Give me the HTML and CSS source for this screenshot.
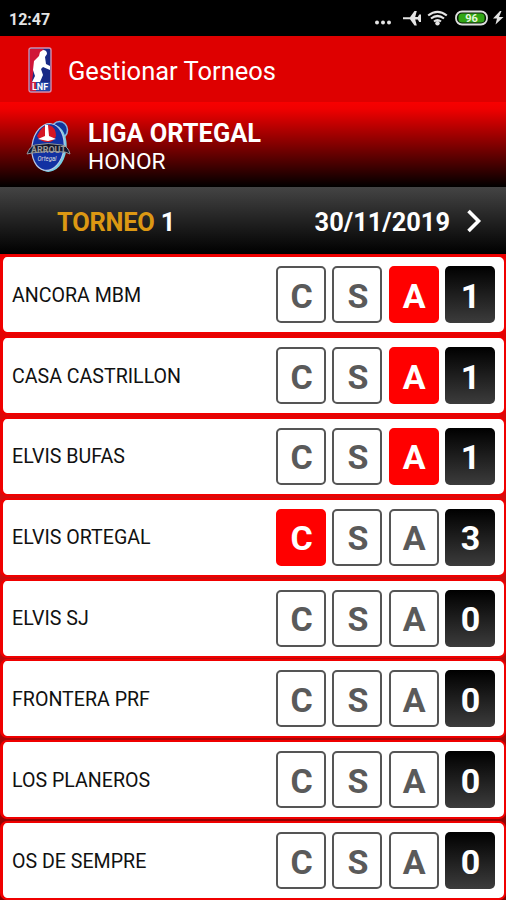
FILE: index.html
```html
<!DOCTYPE html>
<html lang="es">
<head>
    <meta charset="UTF-8">
    <meta name="viewport" content="width=device-width, initial-scale=1.0">
    <title>Gestionar Torneos</title>
    <link rel="stylesheet" href="styles.css">
</head>
<body>
    <div class="statusbar">
        <span class="clock">12:47</span>
        <svg class="status-icons" width="134" height="36" viewBox="0 0 134 36">
            <g fill="#e4e4e4">
                <circle cx="5" cy="22.500" r="2"/>
                <circle cx="11" cy="22.500" r="2"/>
                <circle cx="17" cy="22.500" r="2"/>
                <!-- avion -->
                <path d="M31 17.200h7L42.500 11h2.300l-1.600 6h2.600l1.400-2.500H49v7.400h-1.800L45.800 19.400h-2.600l1.600 6h-2.300L38 19.200h-7z"/>
                <circle cx="65.500" cy="23.200" r="2.200"/>
            </g>
            <!-- wifi -->
            <g fill="none" stroke="#e4e4e4" stroke-width="2.200">
                <path d="M56.200 15.500q9.300-7.400 18.600 0"/>
                <path d="M59 18.500q6.500-5 13 0"/>
                <path d="M62 21.500q3.500-2.800 7 0"/>
            </g>
            <!-- bateria -->
            <rect x="84" y="11.500" width="31" height="13" rx="6" fill="#071d05" stroke="#dedede" stroke-width="1.800"/>
            <rect x="86.500" y="13.500" width="26" height="9" rx="3.500" fill="#31a514"/>
            <text class="battery" x="99.500" y="22" text-anchor="middle">96</text>
            <path d="M128 11l-7 7.500h4l-1.500 6 8-7.500h-4.500l2.500-6z" fill="#e4e4e4"/>
        </svg>
    </div>

    <header class="appbar">
        <svg class="logo" width="24" height="46" viewBox="0 0 24 46">
            <rect x="1" y="1" width="22" height="44" rx="2" fill="#182a86"/>
            <path d="M2 2h14L6 19l-2 16H2z" fill="#d01537"/>
            <path d="M15 3q4 0 4 4l-2 3 1 7 4 2v4l-7-3-2 2 2 6-3 7H4l3-6-2-6 1-9 5-5 1-4z" fill="#fff"/>
            <path d="M2 35h20v9H2z" fill="#2546a4"/>
            <path d="M2 35h6v9H2z" fill="#c92142"/>
            <rect x="1" y="1" width="22" height="44" rx="2" fill="none" stroke="#d690ad" stroke-width="1.400"/>
            <text class="logo-text" x="12" y="43" text-anchor="middle">LNF</text>
        </svg>
        <h1>Gestionar Torneos</h1>
    </header>

    <section class="liga">
        <svg class="escudo" width="46" height="54" viewBox="0 0 46 54">
            <ellipse cx="33.500" cy="10" rx="8" ry="8.500" fill="#12359b" stroke="#89b5e1" stroke-width="1.500"/>
            <ellipse cx="24" cy="28" rx="16.500" ry="24" fill="#76cde2" transform="rotate(8 24 28)"/>
            <ellipse cx="22" cy="27" rx="16" ry="23.500" fill="#1231a3" stroke="#b7c7e5" stroke-width="1.200" transform="rotate(8 22 27)"/>
            <path d="M11 16q5-11 12-11 7 2 7 11-2 6-8 6-8 0-11-6z" fill="#d51624"/>
            <path d="M19 5h3l1 11 7 3-8 2-10-2 7-3z" fill="#fff"/>
            <path d="M1 34q3-8 8-9 13-3 27 0 6 1 8 9l-5-2q-17-2-33 1z" fill="#11152c" stroke="#93999f"/>
            <text class="escudo-text" x="22.500" y="33" text-anchor="middle" textLength="35" lengthAdjust="spacingAndGlyphs">ARROUT</text>
            <text class="escudo-sub" x="21" y="41" text-anchor="middle" textLength="19" lengthAdjust="spacingAndGlyphs">Ortegal</text>
        </svg>
        <div>
            <div class="liga-nombre">LIGA ORTEGAL</div>
            <div class="liga-categoria">HONOR</div>
        </div>
    </section>

    <section class="torneo">
        <div class="torneo-nombre"><span>TORNEO</span> 1</div>
        <div class="fecha">30/11/2019</div>
        <svg class="flecha" width="16" height="24" viewBox="0 0 16 24">
            <path d="M2.500 2l10 10-10 10" fill="none" stroke="#fff" stroke-width="3.600"/>
        </svg>
    </section>

    <main class="equipos">
        <div class="equipo">
            <div class="nombre">ANCORA MBM</div>
            <div class="boton">C</div>
            <div class="boton">S</div>
            <div class="boton activo">A</div>
            <div class="boton puntos">1</div>
        </div>
        <div class="equipo">
            <div class="nombre">CASA CASTRILLON</div>
            <div class="boton">C</div>
            <div class="boton">S</div>
            <div class="boton activo">A</div>
            <div class="boton puntos">1</div>
        </div>
        <div class="equipo">
            <div class="nombre">ELVIS BUFAS</div>
            <div class="boton">C</div>
            <div class="boton">S</div>
            <div class="boton activo">A</div>
            <div class="boton puntos">1</div>
        </div>
        <div class="equipo">
            <div class="nombre">ELVIS ORTEGAL</div>
            <div class="boton activo">C</div>
            <div class="boton">S</div>
            <div class="boton">A</div>
            <div class="boton puntos">3</div>
        </div>
        <div class="equipo">
            <div class="nombre">ELVIS SJ</div>
            <div class="boton">C</div>
            <div class="boton">S</div>
            <div class="boton">A</div>
            <div class="boton puntos">0</div>
        </div>
        <div class="equipo">
            <div class="nombre">FRONTERA PRF</div>
            <div class="boton">C</div>
            <div class="boton">S</div>
            <div class="boton">A</div>
            <div class="boton puntos">0</div>
        </div>
        <div class="equipo">
            <div class="nombre">LOS PLANEROS</div>
            <div class="boton">C</div>
            <div class="boton">S</div>
            <div class="boton">A</div>
            <div class="boton puntos">0</div>
        </div>
        <div class="equipo">
            <div class="nombre">OS DE SEMPRE</div>
            <div class="boton">C</div>
            <div class="boton">S</div>
            <div class="boton">A</div>
            <div class="boton puntos">0</div>
        </div>
    </main>
</body>
</html>
```
FILE: styles.css
```css
* {
    box-sizing: border-box;
}

body {
    font-family: Roboto, "Liberation Sans", sans-serif;
    margin: 0;
    height: 900px;
    display: flex;
    flex-direction: column;
    overflow: hidden;
    background-color: #000;
}

/* Barra de estado */
.statusbar {
    flex: none;
    display: flex;
    justify-content: space-between;
    align-items: center;
    height: 36px;
    padding: 0 0 0 9px;
    background-color: #000;
    color: #e4e4e4;
}

.clock {
    font-size: 16px;
    font-weight: bold;
    padding-top: 2px;
}

.battery {
    font-size: 11px;
    font-weight: bold;
    fill: #e6f5dd;
}

/* Cabecera */
.appbar {
    flex: none;
    display: flex;
    align-items: center;
    height: 66px;
    padding: 2px 0 0 28px;
    background-color: #de0000;
    color: #fff;
}

.appbar h1 {
    margin: 1px 0 0 16px;
    font-size: 25.5px;
    font-weight: normal;
}

.logo-text {
    font-size: 9px;
    font-weight: bold;
    fill: #fff;
}

.liga {
    flex: none;
    display: flex;
    align-items: center;
    height: 85px;
    padding: 4px 0 0 26px;
    background: linear-gradient(#f80000 0%, #f00000 8%, #000 100%);
    color: #fff;
}

.escudo {
    margin-right: 16px;
}

.escudo-text {
    font-size: 9px;
    font-weight: bold;
    fill: #9a9a9a;
}

.escudo-sub {
    font-size: 8px;
    font-style: italic;
    fill: #ddd;
}

.liga-nombre {
    font-size: 25.4px;
    font-weight: bold;
    line-height: 30px;
}

.liga-categoria {
    font-size: 22.7px;
    line-height: 28px;
}

.torneo {
    flex: none;
    display: flex;
    align-items: center;
    height: 67px;
    padding: 3px 24px 0 57px;
    background: linear-gradient(#444, #000);
    color: #fff;
    font-size: 25.4px;
    font-weight: bold;
}

.torneo-nombre {
    flex: 1;
    letter-spacing: -0.2px;
}

.torneo-nombre span {
    color: #dc9813;
}

.flecha {
    margin: -2px 0 0 16px;
}

/* Lista de equipos */
.equipos {
    flex: 1;
    display: flex;
    flex-direction: column;
    gap: 1.86px;
    padding-top: 1.2px;
    background: linear-gradient(#e80000, #d01010 45%, #800000);
}

.equipo {
    flex: none;
    display: flex;
    align-items: center;
    gap: 6.3px;
    height: 79px;
    padding: 0 9px;
    border: 2px solid #f00000;
    border-left-width: 3px;
    border-radius: 7px;
    background-color: #fff;
}

.nombre {
    flex: 1;
    padding-top: 1px;
    font-size: 19.6px;
    color: #111;
}

.boton {
    display: flex;
    justify-content: center;
    align-items: center;
    width: 50px;
    height: 57px;
    padding: 2px 0 0 1px;
    border: 2px solid #555;
    border-radius: 5px;
    font-size: 34px;
    font-weight: bold;
    color: #5a5a5a;
}

.boton.activo {
    background-color: #f00;
    border-color: #f00;
    color: #fff;
}

.boton.puntos {
    background: linear-gradient(#000, #3c3c3c);
    border: none;
    color: #fff;
}
```
